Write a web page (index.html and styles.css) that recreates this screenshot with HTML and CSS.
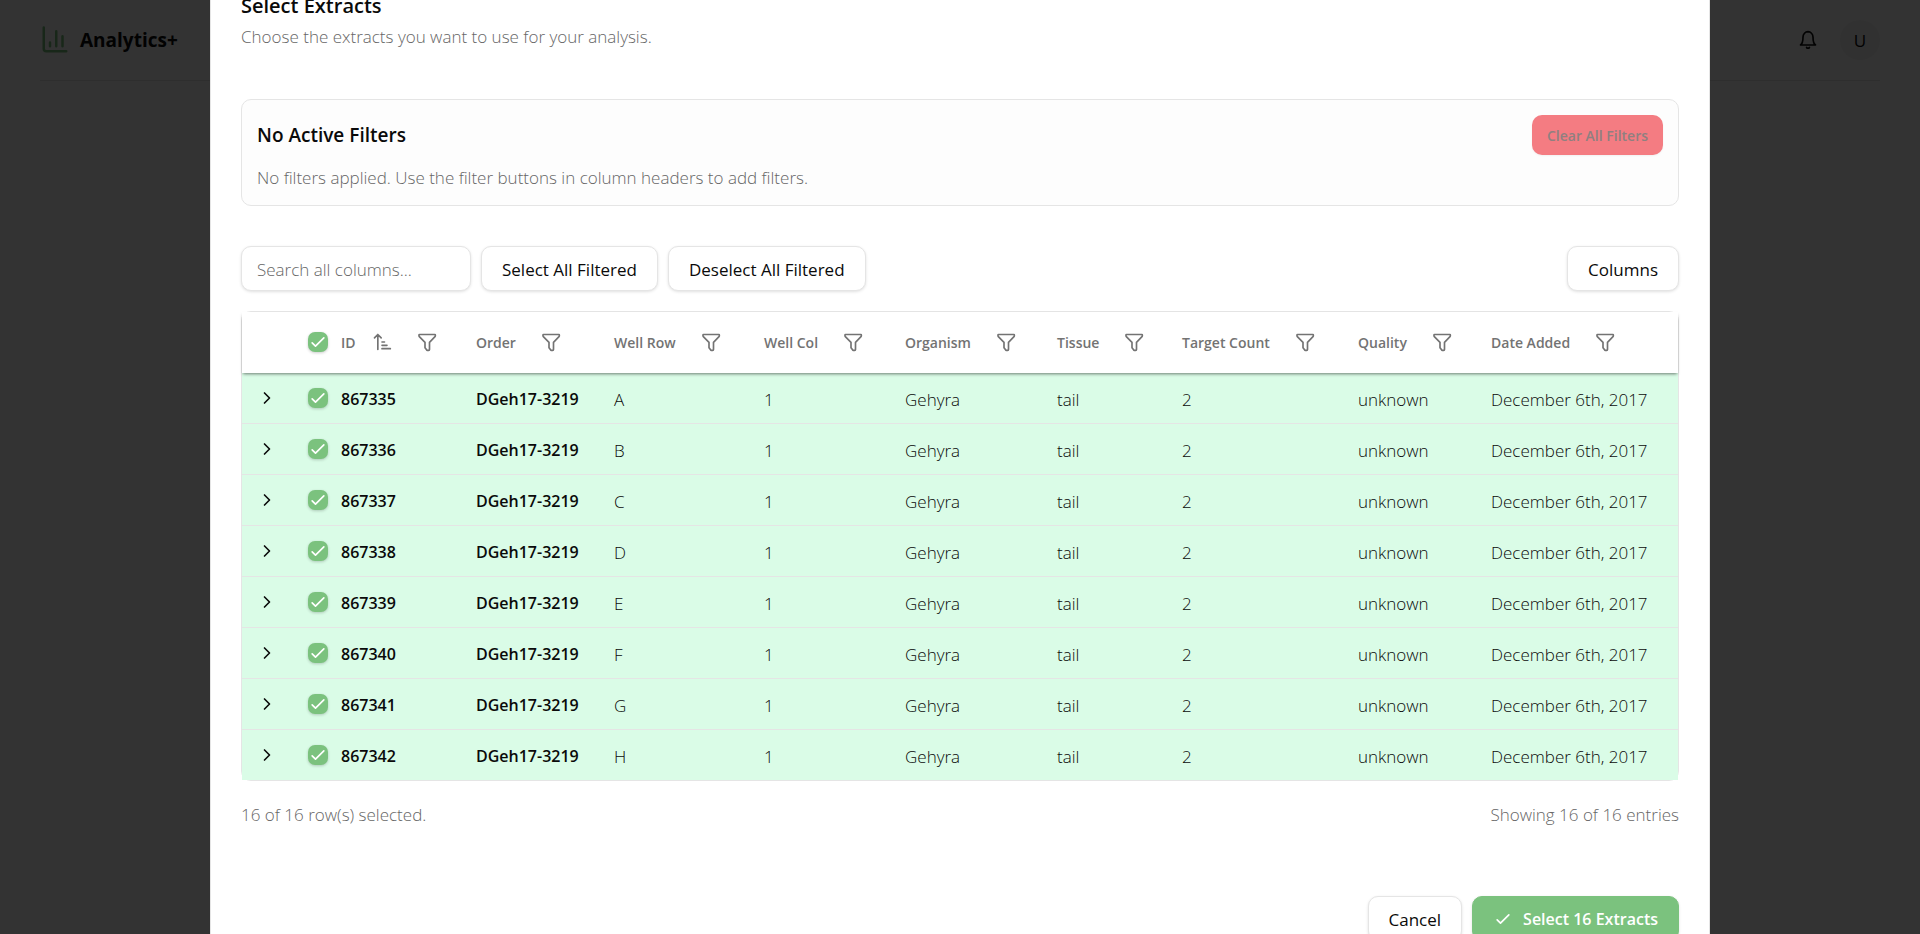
FILE: index.html
```html
<!DOCTYPE html>
<html lang="en">
<head>
  <meta charset="UTF-8">
  <meta name="viewport" content="width=device-width, initial-scale=1">
  <title>Analytics+</title>
  <link rel="stylesheet" href="styles.css">
</head>
<body>

  <!-- icons shared by the whole page -->
  <svg class="sprite" aria-hidden="true">
    <symbol id="icon-check" viewBox="0 0 24 24"><path d="M5 13l4 4L19 7"/></symbol>
    <symbol id="icon-chevron" viewBox="0 0 24 24"><path d="M9 6l6 6-6 6"/></symbol>
    <symbol id="icon-filter" viewBox="0 0 24 24"><path d="M3 3h18.400q.6 0 .6.600v1q0 .6-.4 1L15 12.400V21q0 1-1 1h-1.600q-.6 0-.9-.6L9.600 19v-6.600L2.800 5.600q-.4-.4-.4-1v-1q0-.6.6-.6z"/></symbol>
    <symbol id="icon-sort" viewBox="0 0 24 24"><path d="M7 21V3M3 7l4-4 4 4M12 12h3M12 16h6M12 20h10"/></symbol>
    <symbol id="icon-bell" viewBox="0 0 24 24"><path d="M18 8.400c0-1.700-.6-3.300-1.800-4.500A6 6 0 0 0 12 2a6 6 0 0 0-4.200 1.900A6.400 6.400 0 0 0 6 8.400C6 15.900 3 18 3 18h18s-3-2.100-3-9.600zM13.700 21a2 2 0 0 1-3.400 0"/></symbol>
    <symbol id="icon-chart" viewBox="0 0 24 24"><path d="M3 2v17a2 2 0 0 0 2 2h16M8 17v-3M13 17V5M18 17V9"/></symbol>
  </svg>

  <header class="topbar">
    <a class="brand" href="#">
      <svg class="brand-icon"><use href="#icon-chart"/></svg>
      Analytics+
    </a>
    <div class="topbar-actions">
      <button class="icon-button" aria-label="Notifications"><svg class="icon"><use href="#icon-bell"/></svg></button>
      <button class="avatar">U</button>
    </div>
  </header>

  <div class="overlay">
    <section class="dialog" role="dialog" aria-labelledby="dialog-title">
      <div class="dialog-header">
        <h2 id="dialog-title">Select Extracts</h2>
        <p>Choose the extracts you want to use for your analysis.</p>
      </div>

      <div class="filters">
        <div class="filters-top">
          <h3>No Active Filters</h3>
          <button class="btn btn-danger" disabled>Clear All Filters</button>
        </div>
        <p>No filters applied. Use the filter buttons in column headers to add filters.</p>
      </div>

      <div class="toolbar">
        <input class="search" type="text" placeholder="Search all columns..." aria-label="Search all columns">
        <button class="btn">Select All Filtered</button>
        <button class="btn">Deselect All Filtered</button>
        <button class="btn btn-columns">Columns</button>
      </div>

      <div class="table-wrap">
        <table>
          <colgroup>
            <col class="col-expand"><col class="col-check"><col class="col-id"><col class="col-order"><col class="col-row"><col class="col-col"><col class="col-organism"><col class="col-tissue"><col class="col-target"><col class="col-quality"><col class="col-date">
          </colgroup>
          <thead>
            <tr id="head"></tr>
          </thead>
          <tbody id="rows"></tbody>
        </table>
      </div>

      <div class="summary">
        <span>16 of 16 row(s) selected.</span>
        <span>Showing 16 of 16 entries</span>
      </div>

      <div class="dialog-footer">
        <button class="btn">Cancel</button>
        <button class="btn btn-primary"><svg class="icon"><use href="#icon-check"/></svg>Select 16 Extracts</button>
      </div>
    </section>
  </div>

  <script src="script.js"></script>
</body>
</html>
```
FILE: styles.css
```css
:root {
  --primary: #7bc27e;
  --danger: #f47c82;
  --border: #e5e5e5;
  --muted: #666;
  --text: #0a0a0a;
  --selected: #dafce7;
}

* {
  box-sizing: border-box;
}

body {
  margin: 0;
  font-family: "Open Sans", "Noto Sans", sans-serif;
  font-size: 17px;
  font-weight: 300;
  line-height: 25px;
  color: var(--text);
  background-color: #fff;
  overflow: hidden;
}

h2,
h3,
p {
  margin: 0;
}

button,
input {
  font: inherit;
  color: inherit;
}

.sprite {
  display: none;
}

.icon,
.brand-icon {
  width: 20px;
  height: 20px;
  flex: none;
  fill: none;
  stroke: currentColor;
  stroke-width: 2;
  stroke-linecap: round;
  stroke-linejoin: round;
}

/* top bar */
.topbar {
  display: flex;
  align-items: center;
  justify-content: space-between;
  height: 81px;
  margin: 0 40px;
  border-bottom: 1px solid var(--border);
}

.brand {
  display: flex;
  align-items: center;
  gap: 10px;
  font-size: 19px;
  font-weight: 700;
  color: var(--text);
  text-decoration: none;
}

.brand-icon {
  width: 30px;
  height: 30px;
  color: var(--primary);
}

.topbar-actions {
  display: flex;
  align-items: center;
  gap: 12px;
}

.icon-button {
  display: flex;
  align-items: center;
  justify-content: center;
  width: 40px;
  height: 40px;
  padding: 0;
  border: 0;
  background: none;
}

.avatar {
  width: 40px;
  height: 40px;
  padding: 0;
  border: 0;
  border-radius: 50%;
  background-color: #f5f5f5;
  font-weight: 400;
}

/* dialog */
.overlay {
  position: fixed;
  inset: 0;
  display: flex;
  align-items: center;
  justify-content: center;
  background-color: rgba(0, 0, 0, 0.8);
}

.dialog {
  flex: 0 1 1500px;
  min-width: 0;
  padding: 30px;
  border: 1px solid var(--border);
  background-color: #fff;
}

.dialog-header {
  margin-bottom: 50px;
}

.dialog-header h2 {
  margin-bottom: 6px;
  font-size: 20px;
  font-weight: 600;
  line-height: 24px;
}

.dialog-header p,
.filters p,
.summary {
  color: var(--muted);
}

.filters {
  padding: 15px;
  margin-bottom: 40px;
  border: 1px solid var(--border);
  border-radius: 10px;
  background-color: #fdfdfd;
}

.filters-top {
  display: flex;
  align-items: center;
  justify-content: space-between;
  margin-bottom: 10px;
}

.filters h3 {
  padding-top: 2px;
  font-size: 19px;
  font-weight: 600;
}

.btn {
  display: flex;
  align-items: center;
  justify-content: center;
  gap: 10px;
  height: 45px;
  padding: 2px 20px 0;
  border: 1px solid var(--border);
  border-radius: 10px;
  background-color: #fff;
  font-weight: 500;
  white-space: nowrap;
  box-shadow: 0 1px 3px rgba(0, 0, 0, 0.12);
}

.btn-danger {
  height: 40px;
  padding: 2px 15px 0;
  border: 0;
  background-color: var(--danger);
  color: #8f8080;
  font-size: 14px;
  font-weight: 600;
  box-shadow: 0 1px 2px rgba(0, 0, 0, 0.05);
}

.btn-primary {
  border-color: var(--primary);
  background-color: var(--primary);
  color: #fff;
  font-size: 16px;
  font-weight: 600;
}

.toolbar {
  display: flex;
  gap: 10px;
  margin-bottom: 20px;
}

.search {
  width: 230px;
  height: 45px;
  padding: 2px 15px 0;
  border: 1px solid var(--border);
  border-radius: 10px;
  background-color: #fff;
  box-shadow: 0 1px 3px rgba(0, 0, 0, 0.12);
}

.search::placeholder {
  color: var(--muted);
}

.btn-columns {
  margin-left: auto;
}

/* table */
.table-wrap {
  border: 1px solid var(--border);
  border-radius: 10px;
}

table {
  width: 100%;
  table-layout: fixed;
  border-collapse: separate;
  border-spacing: 0;
}

.col-expand { width: 56px; }
.col-check { width: 33px; }
.col-id { width: 135px; }
.col-order { width: 138px; }
.col-row { width: 150px; }
.col-col { width: 141px; }
.col-organism { width: 152px; }
.col-tissue { width: 125px; }
.col-target { width: 176px; }
.col-quality { width: 133px; }
.col-date { width: 197px; }

thead {
  position: relative;
  background-color: #fff;
  box-shadow: 0 2px 3px -1px rgba(0, 0, 0, 0.5);
}

th,
td {
  padding: 0 10px;
  text-align: left;
  white-space: nowrap;
}

th {
  height: 61px;
  font-size: 14px;
  font-weight: 600;
  color: #737373;
}

td {
  height: 51px;
  padding-top: 3px;
  border-bottom: 1px solid var(--border);
  background-color: var(--selected);
}

tr:last-child td {
  height: 50px;
  border-bottom: 0;
}

.strong {
  font-size: 16px;
  font-weight: 600;
}

.cell-expand {
  padding: 0 15px;
}

.cell-check {
  padding: 0 0 0 10px;
}

.head-cell {
  display: flex;
  align-items: center;
  gap: 25px;
}

.head-cell.sorted {
  gap: 16px;
}

.head-cell.sorted button + button {
  margin-left: 9px;
}

.head-cell button,
.expand {
  display: flex;
  padding: 0;
  border: 0;
  background: none;
}

.check {
  position: relative;
  display: block;
  width: 20px;
  height: 20px;
  color: #fff;
}

.check input {
  appearance: none;
  display: block;
  width: 20px;
  height: 20px;
  margin: 0;
  border-radius: 7px;
  background-color: var(--primary);
  box-shadow: 0 1px 3px rgba(0, 0, 0, 0.2);
}

.check .icon {
  position: absolute;
  inset: 0;
}

.summary {
  display: flex;
  justify-content: space-between;
  margin: 21px 0 69px;
}

.dialog-footer {
  display: flex;
  justify-content: flex-end;
  gap: 10px;
}
```
FILE: script.js
```js
const columns = ['ID', 'Order', 'Well Row', 'Well Col', 'Organism', 'Tissue', 'Target Count', 'Quality', 'Date Added'];
const wellRows = ['A', 'B', 'C', 'D', 'E', 'F', 'G', 'H'];

function icon(name) {
  return `<svg class="icon"><use href="#icon-${name}"/></svg>`;
}

function checkbox(label) {
  return `<label class="check"><input type="checkbox" checked aria-label="${label}">${icon('check')}</label>`;
}

document.getElementById('head').innerHTML =
  `<th></th><th class="cell-check">${checkbox('Select all')}</th>` +
  columns.map(name => {
    const sorted = name === 'ID';
    const sort = sorted ? `<button aria-label="Sort by ID">${icon('sort')}</button>` : '';
    return `<th><div class="head-cell${sorted ? ' sorted' : ''}">${name}${sort}` +
      `<button aria-label="Filter ${name}">${icon('filter')}</button></div></th>`;
  }).join('');

document.getElementById('rows').innerHTML = wellRows.map((well, i) => {
  const id = 867335 + i;
  return `<tr>
    <td class="cell-expand"><button class="expand" aria-label="Expand ${id}">${icon('chevron')}</button></td>
    <td class="cell-check">${checkbox('Select ' + id)}</td>
    <td class="strong">${id}</td>
    <td class="strong">DGeh17-3219</td>
    <td>${well}</td>
    <td>1</td>
    <td>Gehyra</td>
    <td>tail</td>
    <td>2</td>
    <td>unknown</td>
    <td>December 6th, 2017</td>
  </tr>`;
}).join('');
```
